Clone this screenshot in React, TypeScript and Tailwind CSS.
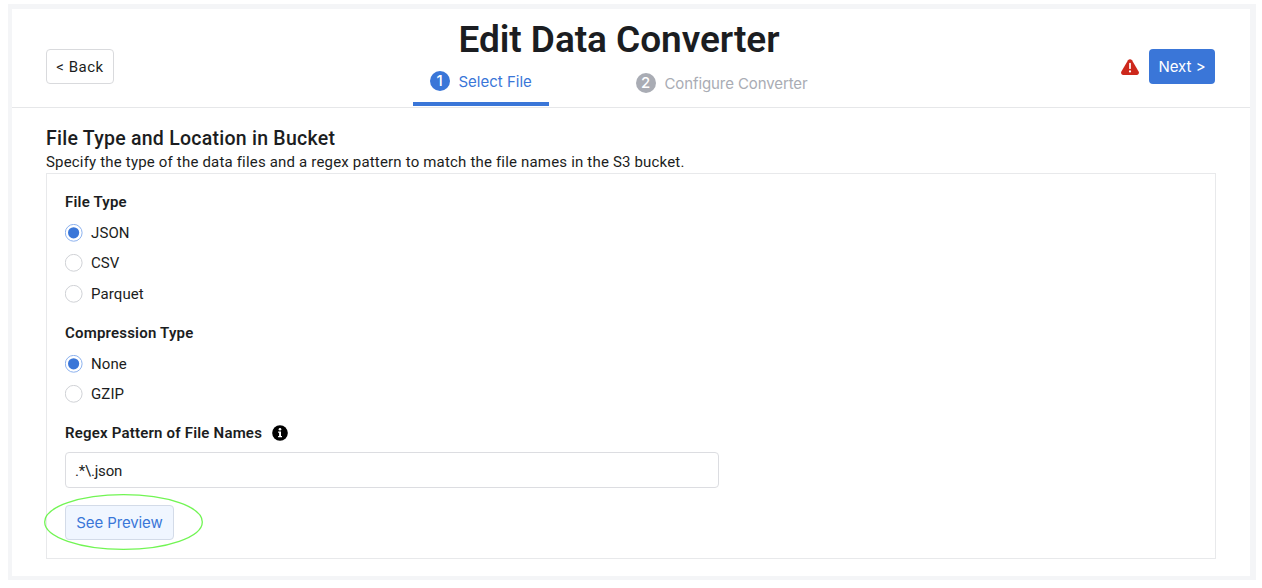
import React, { useState } from 'react';

function StepBadge({ n, active }: { n: number; active?: boolean }) {
  return (
    <span
      className={`flex h-5 w-5 items-center justify-center rounded-full font-['Inter',sans-serif] text-[15px] leading-5 font-medium text-white ${
        active ? 'bg-[#3a76d8]' : 'bg-[#a9acb4]'
      }`}
    >
      {n}
    </span>
  );
}

function WarningIcon() {
  return (
    <svg viewBox="0 0 18 16" className="h-4 w-[18px]" aria-hidden="true">
      <path
        d="M7 1.3C7.9-.1 10.1-.1 11 1.3L17.6 12.6C18.5 14.2 17.5 15.9 15.8 15.9H2.2C.5 15.9-.5 14.2.4 12.6Z"
        fill="#cd281c"
      />
      <path d="M9 4.6V9.2" stroke="#fff" strokeWidth="1.7" strokeLinecap="round" />
      <circle cx="9" cy="12.4" r="1.1" fill="#fff" />
    </svg>
  );
}

function InfoIcon() {
  return (
    <svg viewBox="0 0 16 16" className="h-4 w-4" aria-hidden="true">
      <circle cx="8" cy="8" r="7.8" fill="#000" />
      <circle cx="8" cy="4.3" r="1.3" fill="#fff" />
      <path d="M6.1 6.6H9V11H10V12.2H6.1V11H7.1V7.8H6.1Z" fill="#fff" />
    </svg>
  );
}

function RadioGroup({
  title,
  options,
  value,
  onChange,
}: {
  title: string;
  options: string[];
  value: string;
  onChange: (v: string) => void;
}) {
  return (
    <div role="radiogroup">
      <div className="h-5 text-[15px] leading-5 font-semibold tracking-[0.2px]">{title}</div>
      <div className="mt-[11px] flex flex-col gap-[10.4px]">
        {options.map((o) => (
          <button
            key={o}
            role="radio"
            aria-checked={o === value}
            onClick={() => onChange(o)}
            className="flex h-5 items-center gap-2 text-[15px] leading-5 tracking-[0.1px]"
          >
            <svg viewBox="0 0 18 18" className="h-[18px] w-[18px]" aria-hidden="true">
              <circle
                cx="8.7"
                cy="8.8"
                r="8.4"
                fill="#fff"
                stroke={o === value ? '#8db2ee' : '#d0d2d6'}
                strokeWidth="1"
              />
              {o === value && <circle cx="8.6" cy="8.8" r="5.6" fill="#3a76d8" />}
            </svg>
            <span>{o}</span>
          </button>
        ))}
      </div>
    </div>
  );
}

export default function App() {
  const [type, setType] = useState('JSON');
  const [compression, setCompression] = useState('None');
  const [pattern, setPattern] = useState('.*\\.json');

  return (
    <div className="h-[588px] w-[1262px] bg-white pt-1 pl-2 font-['Roboto',sans-serif] text-[#1b1d21]">
      <div className="flex h-[576px] w-[1248px] flex-col border-x-4 border-t-[5px] border-r-[6px] border-b-4 border-[#f4f5f7]">
        <header className="flex h-[99px] shrink-0 justify-between border-b border-[#e6e7e9] pr-[35px] pl-[34px]">
          <div className="w-[190px] pt-10">
            <button className="h-[35px] w-[68px] rounded-[4px] border border-[#d9dadd] text-[15px] leading-5 tracking-[0.5px]">
              &lt; Back
            </button>
          </div>
          <div className="flex flex-col">
            <h1 className="mt-[7px] h-12 pr-[13px] text-center text-[37px] leading-[48px] font-semibold tracking-[-0.05px]">
              Edit Data Converter
            </h1>
            <div className="flex h-[42px] w-[426px] font-['Inter',sans-serif] text-[15px]">
              <div className="flex w-[136px] items-start gap-[9px] border-b-4 border-[#3a76d8] pt-[7px] pl-[17px] text-[#3a76d8]">
                <StepBadge n={1} active />
                <span className="leading-[22px] whitespace-nowrap">Select File</span>
              </div>
              <div className="flex items-start gap-[9px] pt-[9px] pl-[87px] text-[#a9acb4]">
                <StepBadge n={2} />
                <span className="leading-[22px] tracking-[-0.1px] whitespace-nowrap">Configure Converter</span>
              </div>
            </div>
          </div>
          <div className="flex w-[200px] items-start justify-end gap-[10px] pt-10">
            <span className="pt-[10px]">
              <WarningIcon />
            </span>
            <button className="h-[35px] w-[66px] rounded-[4px] bg-[#3a76d8] font-['Inter',sans-serif] text-[15px] leading-5 text-white">
              Next &gt;
            </button>
          </div>
        </header>

        <main className="px-[34px] pt-[19px]">
          <h2 className="h-6 text-[19.5px] leading-6 font-medium tracking-[0.25px]">
            File Type and Location in Bucket
          </h2>
          <p className="mt-px mb-px h-5 text-[15px] leading-5 tracking-[0.18px]">
            Specify the type of the data files and a regex pattern to match the file names in the S3 bucket.
          </p>
          <section className="flex h-[386px] w-[1170px] flex-col border border-[#e8e9eb] px-[18px] pt-[18px]">
            <RadioGroup title="File Type" options={['JSON', 'CSV', 'Parquet']} value={type} onChange={setType} />
            <div className="mt-[19px]">
              <RadioGroup
                title="Compression Type"
                options={['None', 'GZIP']}
                value={compression}
                onChange={setCompression}
              />
            </div>
            <label className="mt-[19px] flex h-5 items-center gap-[9.5px] text-[15px] leading-5 font-semibold tracking-[0.2px]">
              Regex Pattern of File Names
              <InfoIcon />
            </label>
            <input
              value={pattern}
              onChange={(e) => setPattern(e.target.value)}
              className="mt-[9px] h-9 w-[654px] shrink-0 rounded-[4px] border border-[#dcdde1] px-[9px] pt-px text-[15px] tracking-[-0.2px] outline-none"
            />
            <div className="relative mt-[17px] w-[109px]">
              <button className="h-[35px] w-[109px] rounded-[4px] border border-[#d3dbe8] bg-[#f0f6ff] font-['Inter',sans-serif] text-[15px] leading-5 tracking-[-0.12px] text-[#3a76d8]">
                See Preview
              </button>
              <svg
                viewBox="0 0 160 57"
                className="pointer-events-none absolute top-[-11px] left-[-21px] h-[57px] w-[160px] max-w-none"
                aria-hidden="true"
              >
                <ellipse cx="79.5" cy="28" rx="78.8" ry="27.3" fill="none" stroke="#71f553" strokeWidth="1.3" />
              </svg>
            </div>
          </section>
        </main>
      </div>
    </div>
  );
}
